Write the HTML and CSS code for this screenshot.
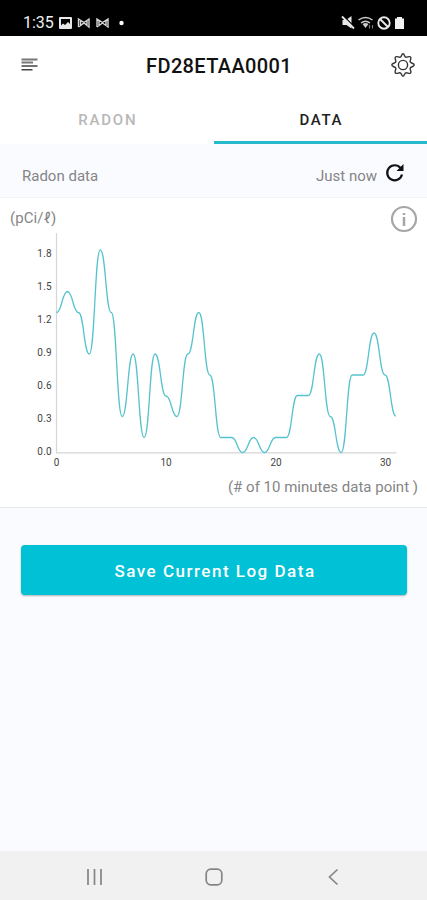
FILE: index.html
```
<!DOCTYPE html>
<html lang="en">
<head>
    <meta charset="UTF-8">
    <meta name="viewport" content="width=device-width, initial-scale=1.0">
    <title>FD28ETAA0001</title>
    <link rel="stylesheet" href="styles.css">
</head>
<body>
    <div class="status-bar">
        <span class="clock">1:35</span>
        <svg class="status-left" width="68" height="16" viewBox="0 0 68 16">
            <rect x="1" y="2" width="13" height="12" rx="1" fill="#e8e8e8"/>
            <path d="M3 4h9v5l-2-2-3 3-2-1.500-2 2z" fill="#000"/>
            <g fill="none" stroke="#d8d8d8" stroke-width="1.400">
                <path d="M20.500 12v-8l5.500 3.500 5-3.500v8l-5-4-5.500 4M22.500 5v6M29 5v6"/>
                <path d="M39 12v-8l5.500 3.500 5.500-3.500v8l-5.500-4-5.500 4M41 5v6M48 5v6"/>
            </g>
            <circle cx="63.500" cy="8" r="2.200" fill="#fff"/>
        </svg>
        <svg class="status-right" width="66" height="16" viewBox="0 0 66 16">
            <path d="M2.500 5h3.500L11.500 1v12.500L6.500 10h-4z" fill="#e8e8e8"/>
            <path d="M3.500 1l11 11" stroke="#000" stroke-width="1.200"/>
            <path d="M2 1.500l12 12" stroke="#e8e8e8" stroke-width="1.800"/>
            <g fill="none" stroke="#ccc" stroke-width="1.500">
                <path d="M18.500 5q7-5 14 0M21 8q4.500-3.500 9 0"/>
            </g>
            <path d="M22.500 9q3-2 6 0l-3 4z" fill="#ccc"/>
            <path d="M29.500 10v3.500M32.500 10v3.500" stroke="#777" stroke-width="1.200"/>
            <circle cx="44" cy="8" r="5.700" fill="none" stroke="#e8e8e8" stroke-width="1.900"/>
            <path d="M40 4l8 8" stroke="#e8e8e8" stroke-width="1.900"/>
            <path d="M55 3.500h2V2h5v1.500h2V14h-9z" fill="#f2f2f2"/>
        </svg>
    </div>

    <div class="header">
        <svg class="menu-icon" width="17" height="14" viewBox="0 0 17 14">
            <path d="M0.500 1.500h16M0.500 4.500h11.500" fill="none" stroke="#777" stroke-width="2"/>
            <path d="M0.500 8h16M0.500 11.700h11" fill="none" stroke="#444" stroke-width="1.600"/>
        </svg>
        <h1>FD28ETAA0001</h1>
        <svg class="gear-icon" width="24" height="24" viewBox="0 0 24 24" fill="none" stroke="#333" stroke-width="1.400" stroke-linejoin="round">
            <path d="M12 .8C13.500.8 13.300 3.600 14.700 4.200S18.300 2.600 19.600 4 18.500 7.500 19.200 8.900 23.200 10.400 23.200 12 19.900 13.700 19.200 15.100 21 18.600 19.600 20 16.100 19.200 14.700 19.800 13.500 23.200 12 23.200 10.700 20.400 9.300 19.800 5.800 21.400 4.400 20 5.500 16.500 4.800 15.100.8 13.600.8 12 4.100 10.300 4.800 8.900 3 5.400 4.400 4 7.900 4.800 9.300 4.200 10.500.8 12 .8z"/>
            <circle cx="12" cy="12" r="4.600"/>
        </svg>
    </div>

    <div class="tabs">
        <div class="tab">RADON</div>
        <div class="tab active">DATA</div>
    </div>

    <div class="update-row">
        <span class="label">Radon data</span>
        <span class="time">Just now</span>
        <svg width="20" height="20" viewBox="0 0 20 20">
            <path d="M15.500 5A7.500 7.500 0 1 0 17 11.500" fill="none" stroke="#111" stroke-width="2.200"/>
            <path d="M18.500 1v7h-7z" fill="#111"/>
        </svg>
    </div>

    <div class="chart-card">
        <div class="chart-top">
            <span class="unit">(pCi/ℓ)</span>
            <svg class="info-icon" width="28" height="28" viewBox="0 0 28 28">
                <circle cx="14" cy="14" r="12" fill="none" stroke="#a6a6a6" stroke-width="2.200"/>
                <path d="M14 8v2M14 12v9" stroke="#a6a6a6" stroke-width="2.500"/>
            </svg>
        </div>
        <svg class="chart" width="427" height="240" viewBox="0 232 427 240">
            <path d="M56.500 233V452.800H396.500" class="axis"/>
            <g class="y-labels">
                <text x="52" y="257">1.8</text>
                <text x="52" y="290">1.5</text>
                <text x="52" y="323">1.2</text>
                <text x="52" y="356">0.9</text>
                <text x="52" y="389">0.6</text>
                <text x="52" y="422">0.3</text>
                <text x="52" y="455">0.0</text>
            </g>
            <g class="x-labels">
                <text x="56.500" y="466">0</text>
                <text x="166" y="466">10</text>
                <text x="276" y="466">20</text>
                <text x="385.500" y="466">30</text>
            </g>
            <!-- one smooth segment per data point -->
            <path class="line" d="M56.500 312.500
                c5.470 0 5.470-21 10.950-21 s5.470 21 10.950 21 s5.470 41.500 10.950 41.500 s5.470-104 10.950-104
                s5.470 62.500 10.950 62.500 s5.470 104 10.950 104 s5.470-62.500 10.950-62.500 s5.470 83.500 10.950 83.500
                s5.470-83.500 10.950-83.500 s5.470 42 10.950 42 s5.470 20.500 10.950 20.500 s5.470-62.500 10.950-62.500
                s5.470-41.500 10.950-41.500 s5.470 62.500 10.950 62.500 s5.470 62.500 10.950 62.500 s5.470 0 10.950 0
                s5.470 15 10.950 15 s5.470-15 10.950-15 s5.470 15 10.950 15 s5.470-15 10.950-15
                s5.470 0 10.950 0 s5.470-42 10.950-42 s5.470 0 10.950 0 s5.470-41.500 10.950-41.500
                s5.470 62.500 10.950 62.500 s5.470 36 10.950 36 s5.470-77.500 10.950-77.500 s5.470 0 10.950 0
                s5.470-42 10.950-42 s5.470 42 10.950 42 s5.470 41 10.950 41"/>
        </svg>
        <div class="chart-note">(# of 10 minutes data point )</div>
    </div>

    <div class="content">
        <button class="save-button">Save Current Log Data</button>
    </div>

    <div class="nav-bar">
        <svg width="18" height="18" viewBox="0 0 18 18" fill="none" stroke="#858585" stroke-width="1.700">
            <path d="M2 1v16M8.500 1v16M15 1v16"/>
        </svg>
        <svg width="18" height="18" viewBox="0 0 18 18" fill="none" stroke="#858585" stroke-width="1.700">
            <rect x="1.200" y="1.200" width="15.600" height="15.600" rx="4.500"/>
        </svg>
        <svg width="18" height="18" viewBox="0 0 18 18" fill="none" stroke="#858585" stroke-width="1.700">
            <path d="M13.500 1.500L5.500 9l8 7.500"/>
        </svg>
    </div>
</body>
</html>
```
FILE: styles.css
```
* {
    box-sizing: border-box;
}
body {
    font-family: Roboto, sans-serif;
    background-color: #fafbff;
    display: flex;
    flex-direction: column;
    height: 900px;
    margin: 0;
    overflow: hidden;
}
svg {
    display: block;
    flex: none;
}
.status-bar {
    display: flex;
    align-items: center;
    height: 36px;
    padding: 9px 21px 0 23px;
    background-color: #000;
    color: #eee;
}
.clock {
    width: 35px;
    font-size: 16px;
    line-height: 18px;
    white-space: nowrap;
}
.status-right {
    margin-left: auto;
}
.header {
    display: flex;
    align-items: center;
    justify-content: space-between;
    height: 58px;
    padding: 0 12px 0 21px;
    background-color: #fff;
}
.header h1 {
    margin: 1px 0 0 9px;
    font-size: 20px;
    font-weight: 500;
    line-height: 24px;
    letter-spacing: 0.35px;
    color: #111;
}
.tabs {
    display: flex;
    height: 50px;
    background-color: #fff;
}
.tab {
    flex: 1;
    padding: 16px 0 0 2px;
    font-size: 15px;
    font-weight: 500;
    line-height: 20px;
    letter-spacing: 1.8px;
    text-align: center;
    color: #b8b8b8;
    border-bottom: 3px solid transparent;
}
.tab.active {
    color: #222;
    border-bottom-color: #26b9cb;
    letter-spacing: 1.6px;
}
.update-row {
    display: flex;
    align-items: center;
    height: 54px;
    padding: 10px 22px 0;
    font-size: 15px;
    color: #858585;
    border-bottom: 1px solid #f3f4f8;
}
.update-row .time {
    margin-left: auto;
}
.update-row svg {
    margin: -6px 0 0 8px;
}
.chart-card {
    height: 310px;
    background-color: #fff;
    border-bottom: 1px solid #e6e8ec;
}
.chart-top {
    display: flex;
    justify-content: space-between;
    height: 34px;
    padding: 7px 9px 0 10px;
}
.unit {
    padding-top: 3px;
    font-size: 15px;
    line-height: 20px;
    letter-spacing: 0.1px;
    color: #858585;
}
.chart {
    overflow: visible;
}
.axis {
    fill: none;
    stroke: #d6d6d6;
    stroke-width: 1.2;
}
.line {
    fill: none;
    stroke: #55c3cd;
    stroke-width: 1.3;
}
.y-labels, .x-labels {
    font-size: 10px;
    fill: #444;
}
.y-labels {
    text-anchor: end;
    letter-spacing: 0.3px;
}
.x-labels {
    text-anchor: middle;
}
.chart-note {
    padding: 5px 9px 0 0;
    font-size: 15px;
    line-height: 20px;
    text-align: right;
    color: #858585;
}
.content {
    flex: 1;
    padding: 37px 20px 0 21px;
}
.save-button {
    display: block;
    width: 100%;
    height: 50px;
    padding: 1px 0 0 2px;
    background-color: #00c1d5;
    color: #fff;
    border: none;
    border-radius: 4px;
    box-shadow: 0 1px 2px rgba(0, 0, 0, 0.3);
    font-family: inherit;
    font-size: 17px;
    font-weight: 500;
    letter-spacing: 1.5px;
    cursor: pointer;
}
.nav-bar {
    display: flex;
    align-items: center;
    justify-content: space-between;
    height: 49px;
    padding: 2px 85px 0 86px;
    background-color: #f1f1f1;
}
```
